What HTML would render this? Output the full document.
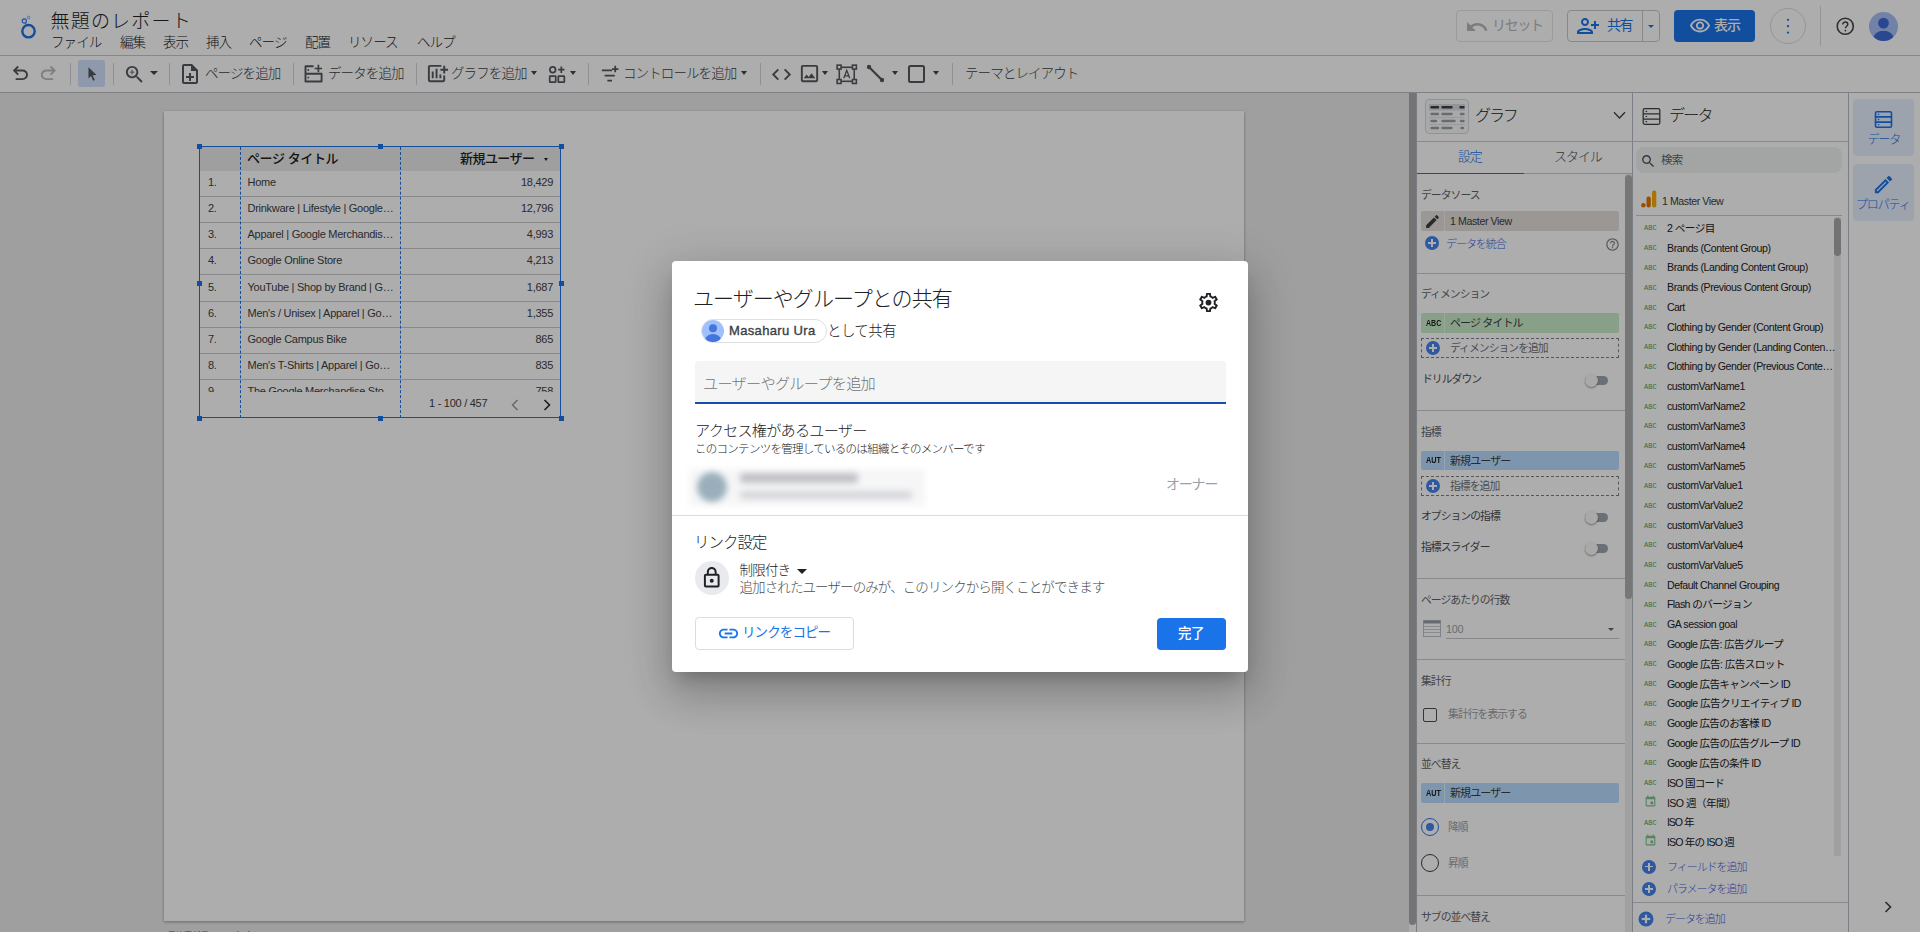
<!DOCTYPE html>
<html lang="ja">
<head>
<meta charset="utf-8">
<title>無題のレポート</title>
<style>
*{box-sizing:border-box;margin:0;padding:0}
html,body{width:1920px;height:932px;overflow:hidden;background:#fff}
body{font-family:"Liberation Sans","Noto Sans CJK JP",sans-serif;color:#202124;position:relative;-webkit-font-smoothing:antialiased}
.abs{position:absolute}
.t{position:absolute;white-space:nowrap;line-height:1}
svg{position:absolute;overflow:visible}
/* ---------- header ---------- */
#hdr{position:absolute;left:0;top:0;width:1920px;height:56px;background:#fff;border-bottom:1px solid #c4c7cb}
#title{left:50.500px;top:12px;font-size:19px;color:#202124;font-weight:300;letter-spacing:1.200px}
.menu{top:36px;font-size:13.5px;color:#202124;letter-spacing:-.9px;font-weight:300}
.hbtn{position:absolute;top:10px;height:32px;border:1px solid #dadce0;border-radius:4px}
/* ---------- toolbar ---------- */
#tb{position:absolute;left:0;top:56px;width:1920px;height:37px;background:#fff;border-bottom:1px solid #b9bdc3}
.sep{position:absolute;top:7px;width:1px;height:22px;background:#d4d6da}
.tbt{top:11px;font-size:13.5px;color:#3c4043;letter-spacing:-.9px;font-weight:300}
.dd{position:absolute;width:0;height:0;border-left:4px solid transparent;border-right:4px solid transparent;border-top:4px solid #444;top:15px}
/* ---------- canvas ---------- */
#cv{position:absolute;left:0;top:93px;width:1409px;height:839px;background:#ebebec}
#page{position:absolute;left:164px;top:18px;width:1080px;height:810px;background:#fff;box-shadow:0 1px 3px rgba(0,0,0,.35)}

/* table */
#tbl{position:absolute;left:36px;top:36px;width:361px;height:271px;font-size:11px;letter-spacing:-.27px;color:#3c4043}
#tbl .hd{position:absolute;left:-1px;top:0;width:362px;height:24px;background:#ebebeb}
#tbl .rows{position:absolute;left:-1px;top:24px;width:362px;height:221px;overflow:hidden;padding-left:1px}
#tbl .r{position:relative;height:26px;width:361px}#tbl .r:after{content:"";position:absolute;left:-1px;bottom:0;width:362px;height:1px;background:#cbcbcb}
#tbl .r span{position:absolute;top:4px;line-height:14px;white-space:nowrap}
#tbl .n{left:8px}#tbl .p{left:47.500px}#tbl .v{right:8px}
.hnd{position:absolute;width:5px;height:5px;background:#1a73e8;margin:0 0 0 0}
.vd{position:absolute;top:0;width:0;height:271px;border-left:1px dashed #1a73e8}

/* ---------- right panels ---------- */
#rp{position:absolute;left:0;top:0;width:0;height:0;font-size:11px}
#rp .bg{position:absolute;left:1416px;top:93px;width:504px;height:839px;background:#fff;border-left:1px solid #b3b9c2}
.hl{position:absolute;height:1px;background:#c9ccd0}
.vl{position:absolute;width:1px;background:#b7bcc4}
.lb{position:absolute;white-space:nowrap;line-height:12px;font-size:10.800px;color:#5f6368;letter-spacing:-.95px;margin-top:.3px}
.chip{position:absolute;left:1421px;width:198px;height:20px;border-radius:2px}
.chip i{position:absolute;left:23px;top:0;width:1px;height:20px;background:rgba(255,255,255,.55)}
.chip b{position:absolute;left:5px;top:5.500px;font:700 9.300px/9px "Liberation Sans",sans-serif;letter-spacing:0;color:#202124;transform:scaleX(.78);transform-origin:0 50%}
.chip span{position:absolute;left:29px;top:4px;line-height:12px;font-size:11px;color:#3c4043;white-space:nowrap;letter-spacing:-.9px}
.dash{position:absolute;left:1421px;width:198px;height:20px;border:1px dashed #7c8085}
.pc{position:absolute;width:14px;height:14px;border-radius:50%;background:#4583ee}
.pc:before{content:"";position:absolute;left:3px;top:6.400px;width:8px;height:1.200px;background:#fff}
.pc:after{content:"";position:absolute;left:6.400px;top:3px;width:1.200px;height:8px;background:#fff}
.tg{position:absolute;left:1585px;width:23px;height:9px;border-radius:5px;background:#9da5ae}
.tg:after{content:"";position:absolute;left:0;top:-2px;width:13px;height:13px;border-radius:50%;background:#fafafa;box-shadow:0 1px 2px rgba(0,0,0,.4)}
.fl{position:absolute;left:1667px;white-space:nowrap;line-height:12px;font-size:10.600px;color:#202124;letter-spacing:-.43px;margin-top:.8px}
.ab{position:absolute;left:1644px;margin-top:.8px;font:400 7px/8px "Liberation Mono",monospace;color:#4fa265;letter-spacing:0}
.lk{position:absolute;white-space:nowrap;line-height:12px;font-size:11px;color:#3a5ddc;font-weight:300;letter-spacing:-1.050px}
/* overlay */
#ov{position:absolute;left:0;top:0;width:1920px;height:932px;background:rgba(0,0,0,.32)}

/* ---------- modal ---------- */
#md{position:absolute;left:672px;top:261px;width:576px;height:411px;background:#fff;border-radius:4px;box-shadow:0 11px 15px -7px rgba(0,0,0,.2),0 24px 38px 3px rgba(0,0,0,.14),0 9px 46px 8px rgba(0,0,0,.12)}
#md .t{color:#3c4043}
</style>
</head>
<body>
<!-- ================= HEADER ================= -->
<div id="hdr">
  <svg style="left:18px;top:12.600px" width="24" height="28" viewBox="0 0 24 28">
    <circle cx="10.5" cy="18.2" r="6.2" fill="none" stroke="#1a73e8" stroke-width="2.4"/>
    <circle cx="6.3" cy="8.1" r="2.1" fill="none" stroke="#4285f4" stroke-width="1.3"/>
    <circle cx="10.6" cy="4.500" r="1.3" fill="none" stroke="#669df6" stroke-width=".9"/>
    <path d="M7.2 9.6 L8.6 12.4" stroke="#4285f4" stroke-width="1.2"/>
  </svg>
  <div class="t" id="title">無題のレポート</div>
  <div class="t menu" style="left:51px">ファイル</div>
  <div class="t menu" style="left:120px">編集</div>
  <div class="t menu" style="left:163px">表示</div>
  <div class="t menu" style="left:206px">挿入</div>
  <div class="t menu" style="left:249px">ページ</div>
  <div class="t menu" style="left:305px">配置</div>
  <div class="t menu" style="left:348px">リソース</div>
  <div class="t menu" style="left:417px">ヘルプ</div>

  <!-- reset -->
  <div class="hbtn" style="left:1456px;width:97px;border-color:#e3e5e8"></div>
  <svg style="left:1465px;top:15px" width="24" height="24" viewBox="0 0 24 24"><path fill="#b4b7bb" d="M12.5 8c-2.65 0-5.05.99-6.9 2.6L2 7v9h9l-3.62-3.62c1.39-1.16 3.16-1.88 5.12-1.88 3.54 0 6.55 2.31 7.6 5.5l2.37-.78C21.08 11.03 17.15 8 12.5 8z"/></svg>
  <div class="t" style="left:1492px;top:18px;font-size:14px;color:#b4b7bb;letter-spacing:-1.3px">リセット</div>
  <!-- share -->
  <div class="hbtn" style="left:1567px;width:93px;border-color:#c6c9cd"></div>
  <div class="abs" style="left:1642px;top:10px;width:1px;height:32px;background:#c6c9cd"></div>
  <svg style="left:1576px;top:14px" width="24" height="24" viewBox="0 0 24 24"><path fill="#1a73e8" d="M13 8c0-2.21-1.79-4-4-4S5 5.790 5 8s1.790 4 4 4 4-1.790 4-4zm-2 0c0 1.100-.9 2-2 2s-2-.9-2-2 .9-2 2-2 2 .9 2 2zM1 18v2h16v-2c0-2.660-5.330-4-8-4s-8 1.340-8 4zm2 0c.2-.71 3.3-2 6-2 2.690 0 5.780 1.280 6 2H3zm17-3v-3h3v-2h-3V7h-2v3h-3v2h3v3h2z"/></svg>
  <div class="t" style="left:1607px;top:18px;font-size:14px;color:#1a73e8;letter-spacing:-1.400px;font-weight:400">共有</div>
  <div class="dd" style="left:1647.500px;top:25px;border-top-color:#1a73e8;border-width:3.5px 3.5px 0 3.5px"></div>
  <!-- view -->
  <div class="abs" style="left:1674px;top:10px;width:81px;height:32px;border-radius:4px;background:#1a73e8"></div>
  <svg style="left:1689px;top:15px" width="22" height="22" viewBox="0 0 24 24"><path fill="#fff" d="M12 6c3.79 0 7.17 2.13 8.82 5.5C19.17 14.87 15.79 17 12 17s-7.17-2.13-8.82-5.5C4.83 8.13 8.21 6 12 6m0-2C7 4 2.73 7.11 1 11.5 2.73 15.89 7 19 12 19s9.27-3.11 11-7.5C21.27 7.11 17 4 12 4zm0 5c1.38 0 2.5 1.12 2.5 2.5S13.38 14 12 14s-2.5-1.12-2.5-2.5S10.62 9 12 9m0-2c-2.48 0-4.5 2.02-4.5 4.5S9.52 16 12 16s4.5-2.02 4.500-4.5S14.480 7 12 7z"/></svg>
  <div class="t" style="left:1714px;top:18px;font-size:14px;color:#fff;letter-spacing:-1px;font-weight:500">表示</div>
  <!-- more -->
  <div class="abs" style="left:1770px;top:8px;width:36px;height:36px;border-radius:50%;border:1px solid #dadce0"></div>
  <svg style="left:1785px;top:17px" width="6" height="18" viewBox="0 0 6 18"><circle cx="3" cy="2.8" r="1.150" fill="#1a73e8"/><circle cx="3" cy="9.200" r="1.150" fill="#1a73e8"/><circle cx="3" cy="15.600" r="1.150" fill="#1a73e8"/></svg>
  <div class="abs" style="left:1820px;top:6px;width:1px;height:40px;background:#dadce0"></div>
  <!-- help -->
  <svg style="left:1835.500px;top:17.200px" width="18.500" height="18.500" viewBox="0 0 20 20"><circle cx="10" cy="10" r="8.700" fill="none" stroke="#444746" stroke-width="1.700"/><path d="M7.300 8.100c0-1.600 1.200-2.700 2.750-2.700s2.700 1 2.700 2.450c0 2.100-2.550 2.300-2.550 4.350" fill="none" stroke="#444746" stroke-width="1.600"/><circle cx="10.150" cy="14.700" r="1.050" fill="#444746"/></svg>
  <!-- avatar -->
  <svg style="left:1869.400px;top:11.750px" width="29" height="29" viewBox="0 0 30 30"><defs><clipPath id="avc"><circle cx="15" cy="15" r="15"/></clipPath></defs><circle cx="15" cy="15" r="15" fill="#a8c0f5"/><g clip-path="url(#avc)"><circle cx="15" cy="11.5" r="5.6" fill="#3f6ad8"/><ellipse cx="15" cy="27" rx="10.500" ry="7.5" fill="#3f6ad8"/></g></svg>
</div>
<!-- ================= TOOLBAR ================= -->
<div id="tb">
  <svg style="left:9.300px;top:5.800px" width="22.800" height="22.800" viewBox="0 0 24 24"><path fill="#55595e" d="M7 19v-2h7.1q1.575 0 2.737-1T18 13.5q0-1.5-1.162-2.5T14.1 10H7.8l2.6 2.600L9 14 4 9l5-5 1.4 1.4L7.8 8h6.3q2.425 0 4.163 1.575T20 13.500q0 2.35-1.737 3.925T14.100 19H7z"/></svg>
  <svg style="left:37px;top:5.800px" width="22.800" height="22.800" viewBox="0 0 24 24"><path fill="#b9bcc0" d="M9.9 19q-2.425 0-4.163-1.575T4 13.5q0-2.35 1.737-3.925T9.9 8h6.3l-2.6-2.6L15 4l5 5-5 5-1.4-1.4 2.6-2.600H9.9q-1.575 0-2.737 1T6 13.5q0 1.500 1.163 2.5T9.900 17H17v2H9.9z"/></svg>
  <div class="sep" style="left:70px"></div>
  <div class="abs" style="left:78px;top:4px;width:27px;height:27px;border-radius:2px;background:#d2e3fc"></div>
  <svg style="left:83.200px;top:9.300px" width="17.500" height="17.500" viewBox="0 0 24 24"><path fill="#55595e" d="M7.500 3.200 L18.600 13.600 L13.200 14 L16.200 20.600 L13.900 21.600 L11 15 L7.500 18.600 Z"/></svg>
  <div class="sep" style="left:113px"></div>
  <svg style="left:122.700px;top:6.700px" width="23" height="23" viewBox="0 0 24 24"><path fill="#55595e" d="M15.5 14h-.79l-.28-.27C15.41 12.59 16 11.11 16 9.5 16 5.91 13.09 3 9.5 3S3 5.91 3 9.5 5.91 16 9.5 16c1.61 0 3.09-.59 4.23-1.57l.27.28v.79l5 4.990L20.490 19l-4.990-5zm-6 0C7.010 14 5 11.990 5 9.5S7.010 5 9.500 5 14 7.010 14 9.500 11.990 14 9.500 14zm2.500-4h-2v2H9v-2H7V9h2V7h1v2h2v1z"/></svg>
  <div class="dd" style="left:150px"></div>
  <div class="sep" style="left:169px"></div>
  <svg style="left:178px;top:6px" width="24" height="24" viewBox="0 0 24 24"><path fill="#55595e" d="M13 11h-2v3H8v2h3v3h2v-3h3v-2h-3zm1-9H6c-1.1 0-2 .9-2 2v16c0 1.1.89 2 1.990 2H18c1.1 0 2-.9 2-2V8l-6-6zm4 18H6V4h7v5h5v11z"/></svg>
  <div class="t tbt" style="left:205px">ページを追加</div>
  <div class="sep" style="left:293px"></div>
  <svg style="left:302px;top:6px" width="24" height="24" viewBox="0 0 24 24" fill="none" stroke="#55595e" stroke-width="1.900"><path d="M11.600 4.300H3.500V19.500H19.600V11.800H3.500" stroke-linejoin="round"/><path d="M16.400 2.800v7.400M12.700 6.500h7.400" stroke-width="1.700"/><circle cx="6.300" cy="8" r=".95" fill="#55595e" stroke="none"/><circle cx="6.300" cy="15.600" r=".95" fill="#55595e" stroke="none"/></svg>
  <div class="t tbt" style="left:328px">データを追加</div>
  <div class="sep" style="left:416px"></div>
  <svg style="left:426px;top:6px" width="23" height="23" viewBox="0 0 24 24"><path fill="#55595e" d="M6 9.990h2v7H6zm8 3h2v4h-2zm-4-6h2v10h-2zM20 7V4h-2v3h-3v2h3v3h2V9h3V7zm-2 12H4V5h12V3H4c-1.1 0-2 .9-2 2v14c0 1.1.9 2 2 2h14c1.100 0 2-.9 2-2v-5h-2v5z"/></svg>
  <div class="t tbt" style="left:451px">グラフを追加</div>
  <div class="dd" style="left:531px;border-width:4px 3.800px 0 3.800px"></div>
  <svg style="left:548.300px;top:8.500px" width="17.200" height="18.900" viewBox="0 0 20 22" fill="none" stroke="#55595e" stroke-width="2"><circle cx="5.500" cy="5.5" r="3.300"/><rect x="2" y="13" width="7" height="7" rx=".5"/><rect x="12" y="13" width="7" height="7" rx=".5"/><path d="M15.500 1.800v7.400M11.800 5.500h7.400"/></svg>
  <div class="dd" style="left:570px;border-width:4px 3.800px 0 3.800px"></div>
  <div class="sep" style="left:588px"></div>
  <svg style="left:599.500px;top:8px" width="20.300" height="20.300" viewBox="0 0 22 22" fill="none" stroke="#55595e" stroke-width="1.900"><path d="M2 7h11M5 12.500h11M8 18h5M16.500 2v7M13 5.500h7"/></svg>
  <div class="t tbt" style="left:623px">コントロールを追加</div>
  <div class="dd" style="left:741px;border-width:4px 3.800px 0 3.800px"></div>
  <div class="sep" style="left:760px"></div>
  <svg style="left:770px;top:7px" width="23" height="23" viewBox="0 0 24 24"><path fill="#55595e" d="M9.400 16.600L4.800 12l4.600-4.600L8 6l-6 6 6 6 1.400-1.400zm5.200 0l4.600-4.600-4.600-4.600L16 6l6 6-6 6-1.400-1.400z"/></svg>
  <svg style="left:798px;top:6px" width="23" height="23" viewBox="0 0 24 24"><path fill="#55595e" d="M19 5v14H5V5h14m0-2H5c-1.100 0-2 .9-2 2v14c0 1.100.9 2 2 2h14c1.100 0 2-.9 2-2V5c0-1.100-.9-2-2-2zm-4.860 8.860l-3 3.870L9 13.140 6 17h12l-3.860-5.140z"/></svg>
  <div class="dd" style="left:822px;border-width:4px 3.800px 0 3.800px"></div>
  <svg style="left:836px;top:7.800px" width="21.500" height="20.600" viewBox="0 0 23 22" fill="none" stroke="#55595e" stroke-width="1.700"><rect x="3.500" y="3.500" width="16" height="15"/><rect x="1.200" y="1.200" width="4.200" height="4.200" fill="#fff"/><rect x="17.600" y="1.200" width="4.200" height="4.200" fill="#fff"/><rect x="1.200" y="16.600" width="4.200" height="4.200" fill="#fff"/><rect x="17.600" y="16.600" width="4.200" height="4.200" fill="#fff"/><path d="M8.300 15.300l3.200-8.600 3.200 8.600M9.400 12.600h4.200" stroke-width="1.400"/></svg>
  <svg style="left:866px;top:8px" width="19" height="19" viewBox="0 0 19 19"><path d="M3 3L16 16" stroke="#55595e" stroke-width="2.200"/><circle cx="3" cy="3" r="2.200" fill="#55595e"/><circle cx="16" cy="16" r="2.200" fill="#55595e"/></svg>
  <div class="dd" style="left:892px;border-width:4px 3.800px 0 3.800px"></div>
  <svg style="left:908px;top:9px" width="17" height="18" viewBox="0 0 17 18" fill="none" stroke="#55595e" stroke-width="2"><rect x="1" y="1" width="15" height="16" rx="1.500"/></svg>
  <div class="dd" style="left:933px;border-width:4px 3.800px 0 3.800px"></div>
  <div class="sep" style="left:952px"></div>
  <div class="t tbt" style="left:965px">テーマとレイアウト</div>
</div>
<!-- ================= CANVAS ================= -->
<div id="cv">
  <div class="t" style="left:167.500px;top:838px;font-size:8.300px;color:#5f6368">最終更新日: <span style="color:#202124;margin-left:4px">2022/11/27 16:19:31</span></div>
  <div id="page">
    <div id="tbl">
      <div class="hd"></div>
      <div class="t" style="left:47px;top:5px;font-size:13px;font-weight:500;color:#202124;letter-spacing:-.4px">ページ タイトル</div>
      <div class="t" style="left:260px;top:5px;font-size:13px;font-weight:500;color:#202124;letter-spacing:-.55px">新規ユーザー</div>
      <div class="dd" style="left:344px;top:11px;border-width:3px 2.500px 0 2.500px;border-top-color:#202124"></div>
      <div class="rows"><div class="r"><span class="n">1.</span><span class="p">Home</span><span class="v">18,429</span></div><div class="r"><span class="n">2.</span><span class="p">Drinkware | Lifestyle | Google…</span><span class="v">12,796</span></div><div class="r"><span class="n">3.</span><span class="p">Apparel | Google Merchandis…</span><span class="v">4,993</span></div><div class="r"><span class="n">4.</span><span class="p">Google Online Store</span><span class="v">4,213</span></div><div class="r" style="height:27px"><span class="n" style="top:5px">5.</span><span class="p" style="top:5px">YouTube | Shop by Brand | G…</span><span class="v" style="top:5px">1,687</span></div><div class="r"><span class="n">6.</span><span class="p">Men's / Unisex | Apparel | Go…</span><span class="v">1,355</span></div><div class="r"><span class="n">7.</span><span class="p">Google Campus Bike</span><span class="v">865</span></div><div class="r"><span class="n">8.</span><span class="p">Men's T-Shirts | Apparel | Go…</span><span class="v">835</span></div><div class="r"><span class="n">9.</span><span class="p">The Google Merchandise Sto…</span><span class="v">758</span></div></div>
      <div class="t" style="left:229px;top:250px;font-size:11px;letter-spacing:-.27px;color:#3c4043;line-height:12px">1 - 100 / 457</div>
      <svg style="left:309px;top:251px" width="12" height="14" viewBox="0 0 12 14" fill="none"><path d="M8.500 2L3.500 7l5 5" stroke="#9a9a9a" stroke-width="1.500"/></svg>
      <svg style="left:341px;top:251px" width="12" height="14" viewBox="0 0 12 14" fill="none"><path d="M3.500 2l5 5-5 5" stroke="#202124" stroke-width="1.500"/></svg>
      <div class="vd" style="left:40px"></div><div class="vd" style="left:200px"></div>
      <div class="abs" style="left:-1px;top:-1px;width:362px;height:272px;border:1px solid #1a73e8"></div>
      <div class="hnd" style="left:-3.500px;top:-3.500px"></div><div class="hnd" style="left:178px;top:-3.500px"></div><div class="hnd" style="left:358.500px;top:-3.500px"></div>
      <div class="hnd" style="left:-3.500px;top:133.500px"></div><div class="hnd" style="left:358.500px;top:133.500px"></div>
      <div class="hnd" style="left:-3.500px;top:268.500px"></div><div class="hnd" style="left:178px;top:268.500px"></div><div class="hnd" style="left:358.500px;top:268.500px"></div>
    </div>
  </div>
</div>
<!-- ================= RIGHT PANELS ================= -->
<div class="abs" style="left:1409px;top:93px;width:7px;height:832px;background:#ababab;border-radius:0 0 4px 4px"></div>
<div id="rp">
  <div class="bg"></div>
  <div class="vl" style="left:1632px;top:93px;height:839px"></div>
  <div class="vl" style="left:1848px;top:93px;height:839px"></div>
  <div class="hl" style="left:1417px;top:141px;width:431px"></div>
  <!-- chart header -->
  <div class="abs" style="left:1425px;top:99px;width:44px;height:35px;border:1px solid #d5d8dc;border-radius:4px;background:#f8f9fa"></div>
  <svg style="left:1425px;top:99px" width="44" height="35" viewBox="0 0 44 35"><rect x="4" y="5" width="36" height="6.500" fill="#d9dce1"/><g stroke-linecap="round" stroke-width="2.400"><path d="M6.500 8.200h6.500M17.500 8.200h9M35.500 8.200h3" stroke="#3c4043"/><path d="M6.500 15h6.500M17.500 15h9M36 15h2.500M6.500 22h4.500M17.500 22h12M36 22h2.500M6.500 29h6.500M17.500 29h9M36.500 29h1.500" stroke="#9aa0a6"/></g><path d="M4 18.500h36M4 25.500h36" stroke="#dadce0" stroke-width=".8"/></svg>
  <div class="t" style="left:1475px;top:107.700px;font-size:16px;color:#202124;font-weight:300;letter-spacing:-2.100px">グラフ</div>
  <svg style="left:1613px;top:111px" width="13" height="9" viewBox="0 0 13 9" fill="none"><path d="M1 1.200l5.500 5.800L12 1.200" stroke="#3c4043" stroke-width="1.300"/></svg>
  <!-- tabs -->
  <div class="t" style="left:1458px;top:150px;font-size:13px;color:#1a73e8;font-weight:300;letter-spacing:-1.200px">設定</div>
  <div class="t" style="left:1554px;top:150px;font-size:13px;color:#4a4e52;font-weight:300;letter-spacing:-1.100px">スタイル</div>
  <div class="hl" style="left:1417px;top:173.400px;width:215px"></div>
  <div class="abs" style="left:1417px;top:172.800px;width:107px;height:1.600px;background:#1a73e8"></div>
  <div class="abs" style="left:1625px;top:174px;width:7px;height:758px;background:#ededed"></div>
  <div class="abs" style="left:1625px;top:175px;width:7px;height:424px;border-radius:4px;background:#b0b0b0"></div>
  <!-- data source -->
  <div class="lb" style="left:1421px;top:189px">データソース</div>
  <div class="chip" style="top:211px;background:#e4dfdb"><i></i><span style="letter-spacing:-.4px;color:#3c4043;font-size:10.600px">1 Master View</span></div>
  <svg style="left:1424px;top:213px" width="17" height="17" viewBox="0 0 24 24"><path fill="#3c4043" d="M3 17.250V21h3.750L17.810 9.940l-3.750-3.750L3 17.250zM20.710 7.040c.39-.39.39-1.020 0-1.410l-2.340-2.340c-.39-.39-1.020-.39-1.410 0l-1.830 1.830 3.750 3.750 1.830-1.830z"/></svg>
  <div class="pc" style="left:1425px;top:236px"></div>
  <div class="lk" style="left:1446px;top:238px">データを統合</div>
  <svg style="left:1605px;top:237px" width="15" height="15" viewBox="0 0 24 24"><path fill="#80868b" d="M11 18h2v-2h-2v2zm1-16C6.480 2 2 6.480 2 12s4.480 10 10 10 10-4.480 10-10S17.520 2 12 2zm0 18c-4.410 0-8-3.590-8-8s3.590-8 8-8 8 3.590 8 8-3.590 8-8 8zm0-14c-2.210 0-4 1.790-4 4h2c0-1.100.9-2 2-2s2 .9 2 2c0 2-3 1.750-3 5h2c0-2.250 3-2.500 3-5 0-2.210-1.790-4-4-4z"/></svg>
  <div class="hl" style="left:1417px;top:273px;width:208px"></div>
  <!-- dimension -->
  <div class="lb" style="left:1421px;top:288px">ディメンション</div>
  <div class="chip" style="top:313px;background:#c9ebc9"><i></i><b style="font-size:8.800px;transform:scaleX(.8);top:5.500px">ABC</b><span>ページ タイトル</span></div>
  <div class="dash" style="top:338px"></div>
  <div class="pc" style="left:1426px;top:341px"></div>
  <div class="lb" style="left:1450px;top:342px;color:#6f7479">ディメンションを追加</div>
  <div class="lb" style="left:1422px;top:373px;color:#4a4e53">ドリルダウン</div>
  <div class="tg" style="top:376px"></div>
  <div class="hl" style="left:1417px;top:410px;width:208px"></div>
  <!-- metric -->
  <div class="lb" style="left:1421px;top:426px">指標</div>
  <div class="chip" style="top:451px;height:18.500px;background:#b9deff"><i></i><b style="top:5px">AUT</b><span style="top:3.500px">新規ユーザー</span></div>
  <div class="dash" style="top:476px"></div>
  <div class="pc" style="left:1426px;top:479px"></div>
  <div class="lb" style="left:1450px;top:480px;color:#6f7479">指標を追加</div>
  <div class="lb" style="left:1421px;top:510px;color:#4a4e53">オプションの指標</div>
  <div class="tg" style="top:513px"></div>
  <div class="lb" style="left:1421px;top:541px;color:#4a4e53">指標スライダー</div>
  <div class="tg" style="top:544px"></div>
  <div class="hl" style="left:1417px;top:578px;width:208px"></div>
  <!-- rows per page -->
  <div class="lb" style="left:1421px;top:594px">ページあたりの行数</div>
  <svg style="left:1423px;top:620px" width="18" height="17" viewBox="0 0 18 17"><rect x=".5" y=".5" width="17" height="16" fill="#fff" stroke="#bdc1c6"/><rect x=".5" y=".5" width="17" height="3" fill="#9aa0a6"/><path d="M1 6.500h16M1 9.500h16M1 12.500h16" stroke="#bdc1c6" stroke-width=".8"/></svg>
  <div class="lb" style="left:1446px;top:623px;color:#9aa0a6;letter-spacing:-.3px">100</div>
  <div class="dd" style="left:1608px;top:628px;border-width:3px 3px 0 3px;border-top-color:#5f6368"></div>
  <div class="hl" style="left:1446px;top:638px;width:173px;background:#c4c7cb"></div>
  <div class="hl" style="left:1417px;top:659px;width:208px"></div>
  <!-- summary row -->
  <div class="lb" style="left:1421px;top:675px">集計行</div>
  <div class="abs" style="left:1423px;top:708px;width:14px;height:14px;border:1.300px solid #4a4e52;border-radius:2px"></div>
  <div class="lb" style="left:1448px;top:708px;color:#9aa0a6">集計行を表示する</div>
  <div class="hl" style="left:1417px;top:743px;width:208px"></div>
  <!-- sort -->
  <div class="lb" style="left:1421px;top:758px">並べ替え</div>
  <div class="chip" style="top:783px;background:#b9deff"><i></i><b>AUT</b><span>新規ユーザー</span></div>
  <div class="abs" style="left:1421px;top:818px;width:18px;height:18px;border:1.300px solid #2f74e6;border-radius:50%"></div>
  <div class="abs" style="left:1425.700px;top:822.700px;width:8.600px;height:8.600px;background:#4583ee;border-radius:50%"></div>
  <div class="lb" style="left:1448px;top:821px;color:#9aa0a6">降順</div>
  <div class="abs" style="left:1421px;top:854px;width:18px;height:18px;border:1.300px solid #3c4043;border-radius:50%"></div>
  <div class="lb" style="left:1448px;top:857px;color:#9aa0a6">昇順</div>
  <div class="hl" style="left:1417px;top:895px;width:208px"></div>
  <div class="lb" style="left:1421px;top:911px">サブの並べ替え</div>

  <!-- ===== data panel ===== -->
  <svg style="left:1642px;top:107px" width="19" height="19" viewBox="0 0 19 19" fill="none" stroke="#3c4043" stroke-width="1.250"><rect x="1.200" y="1.700" width="16.600" height="15.600" rx="1.500"/><path d="M1.200 6.900h16.600M1.200 12.100h16.600"/><path d="M3.600 4.300h1.500M3.600 9.500h1.500M3.600 14.700h1.500" stroke-width="1.200"/></svg>
  <div class="t" style="left:1669px;top:107.700px;font-size:16px;color:#202124;font-weight:300;letter-spacing:-1.700px">データ</div>
  <div class="abs" style="left:1636px;top:147px;width:206px;height:26px;border-radius:8px;background:#f1f3f4"></div>
  <svg style="left:1640.300px;top:153px" width="16.500" height="16.500" viewBox="0 0 24 24"><path fill="#50555a" d="M15.500 14h-.79l-.28-.27C15.410 12.590 16 11.110 16 9.500 16 5.910 13.090 3 9.500 3S3 5.910 3 9.500 5.910 16 9.500 16c1.610 0 3.090-.59 4.230-1.570l.27.28v.79l5 4.990L20.490 19l-4.990-5zm-6 0C7.010 14 5 11.990 5 9.500S7.010 5 9.500 5 14 7.010 14 9.500 11.990 14 9.500 14z"/></svg>
  <div class="lb" style="left:1661px;top:154px;font-size:11.500px;letter-spacing:-.8px">検索</div>
  <svg style="left:1641px;top:190px" width="17" height="18" viewBox="0 0 17 18"><rect x="11" y="0.500" width="4.300" height="17" rx="2" fill="#f9ab00"/><rect x="5.500" y="6.500" width="4.300" height="11" rx="2" fill="#e37400"/><circle cx="2.400" cy="15.300" r="2.200" fill="#e37400"/></svg>
  <div class="fl" style="left:1662px;top:194px;color:#3c4043">1 Master View</div>
  <div class="hl" style="left:1636px;top:215px;width:206px"></div>
  <div class="abs" style="left:1834px;top:217px;width:7px;height:639px;background:#ececec"></div>
  <div class="abs" style="left:1834px;top:218px;width:7px;height:38px;border-radius:4px;background:#a9a9a9"></div>
  <div class="ab" style="top:223.5px">ABC</div><div class="fl" style="top:221.0px;letter-spacing:-0.53px">2 ページ目</div><div class="ab" style="top:243.3px">ABC</div><div class="fl" style="top:240.8px">Brands (Content Group)</div><div class="ab" style="top:263.1px">ABC</div><div class="fl" style="top:260.6px">Brands (Landing Content Group)</div><div class="ab" style="top:283.0px">ABC</div><div class="fl" style="top:280.5px">Brands (Previous Content Group)</div><div class="ab" style="top:302.8px">ABC</div><div class="fl" style="top:300.3px;letter-spacing:-0.63px">Cart</div><div class="ab" style="top:322.6px">ABC</div><div class="fl" style="top:320.1px">Clothing by Gender (Content Group)</div><div class="ab" style="top:342.4px">ABC</div><div class="fl" style="top:339.9px">Clothing by Gender (Landing Conten…</div><div class="ab" style="top:362.2px">ABC</div><div class="fl" style="top:359.7px">Clothing by Gender (Previous Conte…</div><div class="ab" style="top:382.1px">ABC</div><div class="fl" style="top:379.6px">customVarName1</div><div class="ab" style="top:401.9px">ABC</div><div class="fl" style="top:399.4px">customVarName2</div><div class="ab" style="top:421.7px">ABC</div><div class="fl" style="top:419.2px">customVarName3</div><div class="ab" style="top:441.5px">ABC</div><div class="fl" style="top:439.0px">customVarName4</div><div class="ab" style="top:461.3px">ABC</div><div class="fl" style="top:458.8px">customVarName5</div><div class="ab" style="top:481.2px">ABC</div><div class="fl" style="top:478.7px">customVarValue1</div><div class="ab" style="top:501.0px">ABC</div><div class="fl" style="top:498.5px">customVarValue2</div><div class="ab" style="top:520.8px">ABC</div><div class="fl" style="top:518.3px">customVarValue3</div><div class="ab" style="top:540.6px">ABC</div><div class="fl" style="top:538.1px">customVarValue4</div><div class="ab" style="top:560.4px">ABC</div><div class="fl" style="top:557.9px">customVarValue5</div><div class="ab" style="top:580.3px">ABC</div><div class="fl" style="top:577.8px">Default Channel Grouping</div><div class="ab" style="top:600.1px">ABC</div><div class="fl" style="top:597.6px;letter-spacing:-0.60px">Flash のバージョン</div><div class="ab" style="top:619.9px">ABC</div><div class="fl" style="top:617.4px">GA session goal</div><div class="ab" style="top:639.7px">ABC</div><div class="fl" style="top:637.2px;letter-spacing:-0.65px">Google 広告: 広告グループ</div><div class="ab" style="top:659.5px">ABC</div><div class="fl" style="top:657.0px;letter-spacing:-0.59px">Google 広告: 広告スロット</div><div class="ab" style="top:679.4px">ABC</div><div class="fl" style="top:676.9px;letter-spacing:-0.66px">Google 広告キャンペーン ID</div><div class="ab" style="top:699.2px">ABC</div><div class="fl" style="top:696.7px;letter-spacing:-0.59px">Google 広告クリエイティブ ID</div><div class="ab" style="top:719.0px">ABC</div><div class="fl" style="top:716.5px;letter-spacing:-0.67px">Google 広告のお客様 ID</div><div class="ab" style="top:738.8px">ABC</div><div class="fl" style="top:736.3px;letter-spacing:-0.65px">Google 広告の広告グループ ID</div><div class="ab" style="top:758.6px">ABC</div><div class="fl" style="top:756.1px;letter-spacing:-0.68px">Google 広告の条件 ID</div><div class="ab" style="top:778.5px">ABC</div><div class="fl" style="top:776.0px;letter-spacing:-0.82px">ISO 国コード</div><svg style="left:1643.500px;top:794.8px" width="13" height="13" viewBox="0 0 24 24"><path fill="#7cc48a" d="M17 12h-5v5h5v-5zM16 1v2H8V1H6v2H5c-1.110 0-1.990.9-1.990 2L3 19c0 1.100.89 2 2 2h14c1.100 0 2-.9 2-2V5c0-1.100-.9-2-2-2h-1V1h-2zm3 18H5V8h14v11z"/></svg><div class="fl" style="top:795.8px;letter-spacing:-0.57px">ISO 週（年間）</div><div class="ab" style="top:818.1px">ABC</div><div class="fl" style="top:815.6px;letter-spacing:-1.07px">ISO 年</div><svg style="left:1643.500px;top:834.4px" width="13" height="13" viewBox="0 0 24 24"><path fill="#7cc48a" d="M17 12h-5v5h5v-5zM16 1v2H8V1H6v2H5c-1.110 0-1.990.9-1.990 2L3 19c0 1.100.89 2 2 2h14c1.100 0 2-.9 2-2V5c0-1.100-.9-2-2-2h-1V1h-2zm3 18H5V8h14v11z"/></svg><div class="fl" style="top:835.4px;letter-spacing:-0.84px">ISO 年の ISO 週</div>
  <div class="pc" style="left:1642px;top:859.500px"></div>
  <div class="lk" style="left:1667px;top:861px">フィールドを追加</div>
  <div class="pc" style="left:1642px;top:882px"></div>
  <div class="lk" style="left:1667px;top:883px">パラメータを追加</div>
  <div class="hl" style="left:1633px;top:902px;width:215px"></div>
  <div class="pc" style="left:1638.500px;top:911.500px;transform:scale(1.070)"></div>
  <div class="lk" style="left:1665px;top:913px">データを追加</div>
  <!-- ===== rail ===== -->
  <div class="abs" style="left:1853px;top:99px;width:61px;height:57px;border-radius:4px;background:#e8f0fe"></div>
  <svg style="left:1874px;top:110px" width="19" height="19" viewBox="0 0 19 19" fill="none" stroke="#1a73e8" stroke-width="1.600"><rect x="1.500" y="1.800" width="16" height="15.400" rx="1.500"/><path d="M1.500 6.900h16M1.500 12.100h16"/><path d="M3.800 4.300h1.500M3.800 9.500h1.500M3.800 14.700h1.500" stroke-width="1.300"/></svg>
  <div class="lk" style="left:1867.500px;top:133.500px;color:#1a73e8;font-size:12px;letter-spacing:-1.150px">データ</div>
  <div class="abs" style="left:1853px;top:164px;width:61px;height:57px;border-radius:4px;background:#e8f0fe"></div>
  <svg style="left:1872px;top:173px" width="23" height="23" viewBox="0 0 24 24"><path fill="#1a73e8" d="M14.060 9.020l.92.92L5.920 19H5v-.92l9.060-9.060M17.660 3c-.25 0-.51.1-.7.29l-1.830 1.830 3.750 3.750 1.830-1.830c.39-.39.39-1.020 0-1.410l-2.340-2.340c-.2-.2-.45-.29-.71-.29zm-3.600 3.190L3 17.250V21h3.750L17.810 9.940l-3.750-3.750z"/></svg>
  <div class="lk" style="left:1856px;top:198.500px;color:#1a73e8;font-size:12px;letter-spacing:-1.150px">プロパティ</div>
  <svg style="left:1883px;top:900px" width="10" height="14" viewBox="0 0 10 14" fill="none"><path d="M2.500 2l5 5-5 5" stroke="#3c4043" stroke-width="1.600"/></svg>
</div>
<div id="ov"></div>
<!-- ================= MODAL ================= -->
<div id="md">
  <div class="t" style="left:21px;top:26.800px;font-size:21px;color:#202124;font-weight:300;letter-spacing:-.95px">ユーザーやグループとの共有</div>
  <svg style="left:525px;top:29.500px" width="23" height="23" viewBox="0 0 24 24"><path fill="#202124" d="M19.430 12.980c.04-.32.07-.64.07-.98 0-.34-.03-.66-.07-.98l2.110-1.650c.19-.15.24-.42.12-.64l-2-3.460c-.09-.16-.26-.25-.44-.25-.06 0-.12.010-.17.030l-2.490 1c-.52-.4-1.080-.73-1.690-.98l-.38-2.650C14.460 2.180 14.250 2 14 2h-4c-.25 0-.46.18-.49.42l-.38 2.650c-.61.25-1.170.59-1.690.98l-2.490-1c-.06-.02-.12-.03-.18-.03-.17 0-.34.09-.43.25l-2 3.460c-.13.22-.07.49.12.64l2.110 1.650c-.04.32-.07.65-.07.98 0 .33.03.66.07.98l-2.110 1.650c-.19.15-.24.42-.12.64l2 3.460c.09.16.26.25.44.25.06 0 .12-.010.17-.030l2.490-1c.52.4 1.080.73 1.690.98l.38 2.650c.03.24.24.42.49.42h4c.25 0 .46-.18.49-.42l.38-2.650c.61-.25 1.170-.59 1.690-.98l2.490 1c.06.02.12.03.18.03.17 0 .34-.09.43-.25l2-3.460c.12-.22.07-.49-.12-.64l-2.110-1.650zm-1.980-1.710c.04.31.05.52.05.73 0 .21-.02.43-.05.73l-.14 1.130.89.7 1.080.84-.7 1.210-1.270-.51-1.040-.42-.9.68c-.43.32-.84.56-1.250.73l-1.060.43-.16 1.130-.2 1.350h-1.400l-.19-1.350-.16-1.130-1.060-.43c-.43-.18-.83-.41-1.230-.71l-.91-.7-1.060.43-1.270.51-.7-1.210 1.080-.84.89-.7-.14-1.130c-.03-.31-.05-.54-.05-.74s.02-.43.05-.73l.14-1.130-.89-.7-1.080-.84.7-1.210 1.270.51 1.040.42.9-.68c.43-.32.84-.56 1.250-.73l1.060-.43.16-1.130.2-1.350h1.390l.19 1.350.16 1.130 1.060.43c.43.18.83.41 1.230.71l.91.7 1.060-.43 1.270-.51.7 1.210-1.070.85-.89.7.14 1.130z"/><circle cx="12" cy="12" r="3" fill="#202124"/></svg>
  <!-- chip -->
  <div class="abs" style="left:29px;top:58px;width:125.500px;height:24px;border:1px solid #dde0e4;border-radius:12px"></div>
  <svg style="left:30px;top:59px" width="22" height="22" viewBox="0 0 22 22"><defs><clipPath id="avm"><circle cx="11" cy="11" r="11"/></clipPath></defs><circle cx="11" cy="11" r="11" fill="#a0c0fb"/><g clip-path="url(#avm)"><circle cx="11" cy="8.300" r="4" fill="#4374e0"/><ellipse cx="11" cy="19.500" rx="7.800" ry="5.400" fill="#4374e0"/></g></svg>
  <div class="t" style="left:57px;top:63px;font-size:13px;color:#3c4043;-webkit-text-stroke:.35px #3c4043;letter-spacing:.35px">Masaharu Ura</div>
  <div class="t" style="left:155px;top:62.500px;font-size:14.500px;letter-spacing:-.6px;color:#202124;font-weight:300">として共有</div>
  <!-- input -->
  <div class="abs" style="left:23px;top:100px;width:531px;height:43px;background:#f5f5f5;border-radius:4px 4px 0 0"></div>
  <div class="abs" style="left:23px;top:141.200px;width:531px;height:2px;background:#174ea6"></div>
  <div class="t" style="left:31px;top:114.500px;font-size:15.200px;color:#70757a;font-weight:300;letter-spacing:-.75px">ユーザーやグループを追加</div>
  <!-- access -->
  <div class="t" style="left:23px;top:162px;font-size:15.200px;color:#202124;font-weight:300;letter-spacing:-.8px">アクセス権があるユーザー</div>
  <div class="t" style="left:23px;top:183px;font-size:11.500px;color:#202124;font-weight:300;letter-spacing:-.72px">このコンテンツを管理しているのは組織とそのメンバーです</div>
  <!-- blurred user -->
  <div class="abs" style="left:10px;top:200px;width:260px;height:52px;filter:blur(3px)">
    <div class="abs" style="left:7px;top:8px;width:236px;height:37px;background:#f6f6f7"></div>
    <div class="abs" style="left:14.500px;top:10.500px;width:30px;height:30px;border-radius:50%;background:#9aafbb"></div>
    <div class="abs" style="left:58px;top:12px;width:118px;height:10px;border-radius:3px;background:#bfc1c5"></div>
    <div class="abs" style="left:58px;top:30px;width:172px;height:8px;border-radius:3px;background:#d4d6d9"></div>
  </div>
  <div class="t" style="left:494px;top:216px;font-size:14px;color:#9aa0a6;letter-spacing:-1.200px">オーナー</div>
  <div class="abs" style="left:0;top:254px;width:576px;height:1px;background:#dadce0"></div>
  <!-- link settings -->
  <div class="t" style="left:22px;top:273.500px;font-size:15.400px;color:#202124;font-weight:300;letter-spacing:-.9px">リンク設定</div>
  <div class="abs" style="left:23px;top:300.200px;width:33.500px;height:33.500px;border-radius:50%;background:#e8eaed"></div>
  <svg style="left:28px;top:304.700px" width="23.500" height="23.500" viewBox="0 0 24 24"><path fill="#202124" d="M18 8h-1V6c0-2.760-2.240-5-5-5S7 3.240 7 6v2H6c-1.100 0-2 .9-2 2v10c0 1.100.9 2 2 2h12c1.100 0 2-.9 2-2V10c0-1.100-.9-2-2-2zM9 6c0-1.660 1.340-3 3-3s3 1.340 3 3v2H9V6zm9 14H6V10h12v10zm-6-3c1.100 0 2-.9 2-2s-.9-2-2-2-2 .9-2 2 .9 2 2 2z"/></svg>
  <div class="t" style="left:67.500px;top:302.700px;font-size:13.500px;color:#202124;font-weight:300;letter-spacing:-.8px">制限付き</div>
  <div class="dd" style="left:124.500px;top:307.500px;border-width:5.500px 5.200px 0 5.200px;border-top-color:#202124"></div>
  <div class="t" style="left:67.500px;top:319.700px;font-size:13.500px;color:#4a4e52;font-weight:300;letter-spacing:-.9px">追加されたユーザーのみが、このリンクから開くことができます</div>
  <!-- buttons -->
  <div class="abs" style="left:23px;top:356px;width:159px;height:33px;border:1px solid #dadce0;border-radius:4px"></div>
  <svg style="left:45px;top:361px" width="23" height="23" viewBox="0 0 24 24"><path fill="#1a73e8" d="M3.900 12c0-1.710 1.390-3.100 3.100-3.100h4V7H7c-2.760 0-5 2.240-5 5s2.240 5 5 5h4v-1.900H7c-1.710 0-3.100-1.390-3.100-3.100zM8 13h8v-2H8v2zm9-6h-4v1.900h4c1.710 0 3.100 1.390 3.100 3.100s-1.390 3.100-3.100 3.100h-4V17h4c2.760 0 5-2.240 5-5s-2.240-5-5-5z"/></svg>
  <div class="t" style="left:70px;top:365px;font-size:13.500px;color:#1a73e8;letter-spacing:-.9px">リンクをコピー</div>
  <div class="abs" style="left:485px;top:357px;width:69px;height:32px;border-radius:4px;background:#1a73e8"></div>
  <div class="t" style="left:506px;top:365.700px;font-size:13.500px;color:#fff;font-weight:500;letter-spacing:-.6px">完了</div>
</div>
</body>
</html>
